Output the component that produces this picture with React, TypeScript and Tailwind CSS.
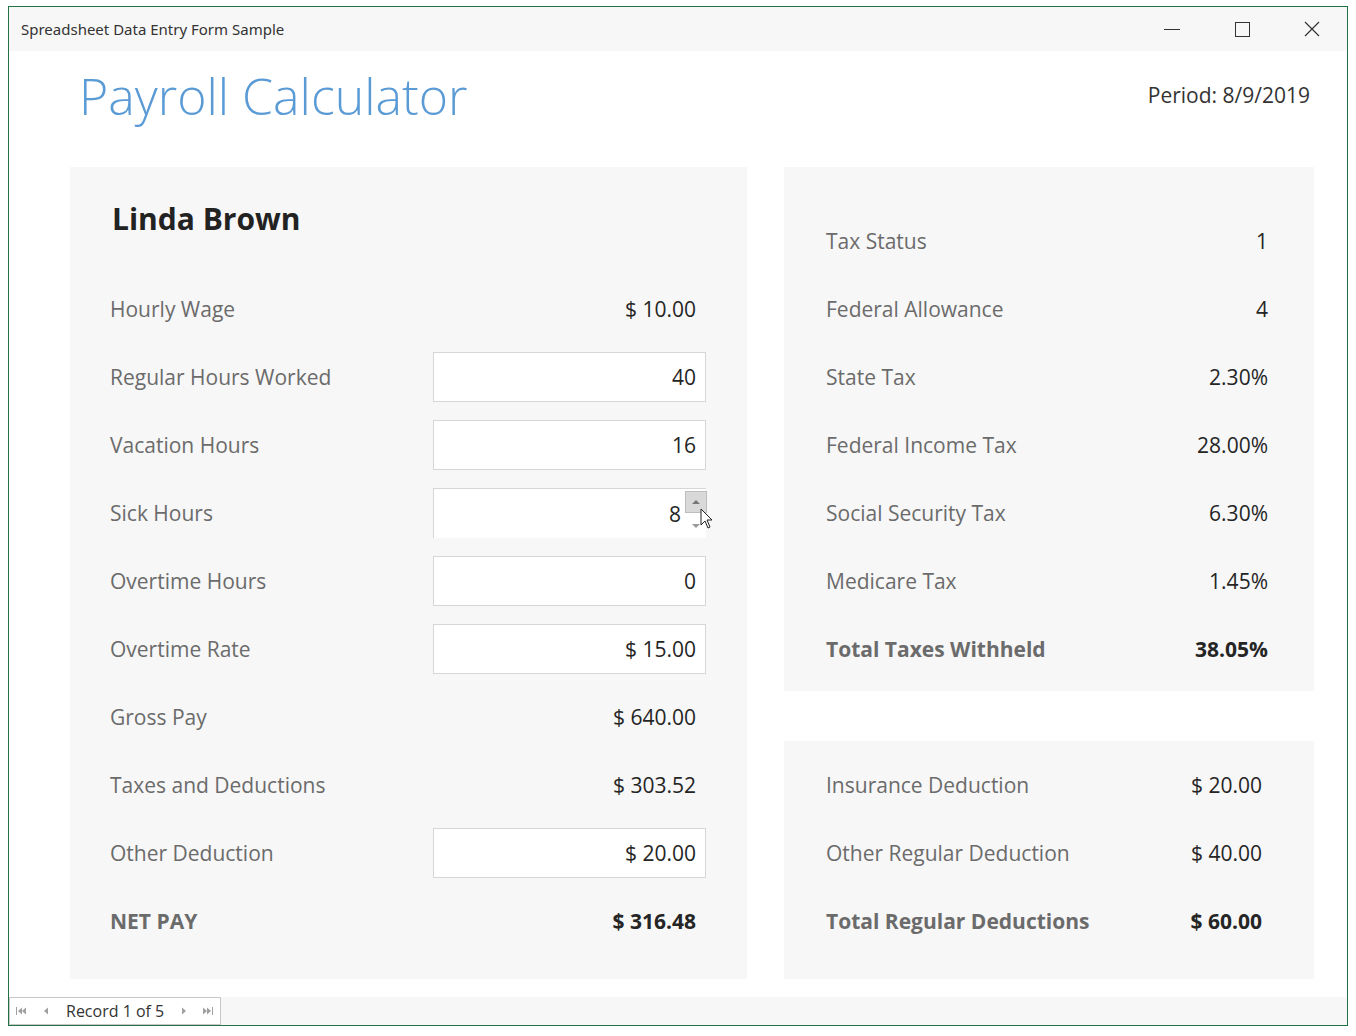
import React from "react";

const font = { fontFamily: '"Open Sans", "Noto Sans", sans-serif' };

type Row = { label: string; value: string; input?: boolean; bold?: boolean; spin?: boolean };

const leftRows: Row[] = [
  { label: "Hourly Wage", value: "$ 10.00" },
  { label: "Regular Hours Worked", value: "40", input: true },
  { label: "Vacation Hours", value: "16", input: true },
  { label: "Sick Hours", value: "8", input: true, spin: true },
  { label: "Overtime Hours", value: "0", input: true },
  { label: "Overtime Rate", value: "$ 15.00", input: true },
  { label: "Gross Pay", value: "$ 640.00" },
  { label: "Taxes and Deductions", value: "$ 303.52" },
  { label: "Other Deduction", value: "$ 20.00", input: true },
  { label: "NET PAY", value: "$ 316.48", bold: true },
];

const taxRows: Row[] = [
  { label: "Tax Status", value: "1" },
  { label: "Federal Allowance", value: "4" },
  { label: "State Tax", value: "2.30%" },
  { label: "Federal Income Tax", value: "28.00%" },
  { label: "Social Security Tax", value: "6.30%" },
  { label: "Medicare Tax", value: "1.45%" },
  { label: "Total Taxes Withheld", value: "38.05%", bold: true },
];

const dedRows: Row[] = [
  { label: "Insurance Deduction", value: "$ 20.00" },
  { label: "Other Regular Deduction", value: "$ 40.00" },
  { label: "Total Regular Deductions", value: "$ 60.00", bold: true },
];

function Label({ row }: { row: Row }) {
  return (
    <span className={`mt-[2px] text-[21px] text-[#6b6b6b] ${row.bold ? "font-bold" : ""}`}>{row.label}</span>
  );
}

function Value({ row }: { row: Row }) {
  return (
    <span className={`mt-[2px] text-[21px] text-[#252525] ${row.bold ? "font-bold" : ""}`}>{row.value}</span>
  );
}

function LeftRow({ row }: { row: Row }) {
  return (
    <div className="h-[68px] flex items-center justify-between">
      <Label row={row} />
      {row.input ? (
        <div
          className={`relative w-[273px] h-[50px] bg-white flex items-center justify-end border-[#d6d6d6] ${
            row.spin ? "border-l border-t pr-[25px]" : "border pr-[9px]"
          }`}
        >
          <Value row={row} />
          {row.spin && (
            <>
              <div className="absolute right-[-1px] top-[2px] w-[22px] h-[22px] bg-[#d9d9d9] border border-[#bdbdbd] flex items-center justify-center">
                <div className="w-0 h-0 border-l-[4px] border-r-[4px] border-b-[4px] border-l-transparent border-r-transparent border-b-[#777]" />
              </div>
              <div className="absolute right-[6px] top-[35px] w-0 h-0 border-l-[4px] border-r-[4px] border-t-[4px] border-l-transparent border-r-transparent border-t-[#999]" />
              <svg className="absolute left-[266px] top-[19px]" width="14" height="22" viewBox="0 0 14 22">
                <path d="M1 1 L1 17 L5 13 L8 20 L10 19 L7 12 L12 12 Z" fill="white" stroke="#222" strokeWidth="1" />
              </svg>
            </>
          )}
        </div>
      ) : (
        <div className="pr-[10px] flex">
          <Value row={row} />
        </div>
      )}
    </div>
  );
}

function SideRow({ row }: { row: Row }) {
  return (
    <div className="h-[68px] flex items-center justify-between">
      <Label row={row} />
      <Value row={row} />
    </div>
  );
}

function NavArrow({ dir, bar }: { dir: "l" | "r"; bar?: boolean }) {
  return (
    <svg width="12" height="10" viewBox="0 0 12 10" fill="#a0a0a0">
      {dir === "l" ? (
        <>
          {bar && <rect x="0" y="1" width="1" height="8" />}
          {bar && <path d="M2 5 L6 1.5 L6 8.5 Z" />}
          <path d={bar ? "M6 5 L10 1.5 L10 8.5 Z" : "M4 5 L8 1.5 L8 8.5 Z"} />
        </>
      ) : (
        <>
          <path d={bar ? "M1 1.5 L5 5 L1 8.5 Z" : "M4 1.5 L8 5 L4 8.5 Z"} />
          {bar && <path d="M5 1.5 L9 5 L5 8.5 Z" />}
          {bar && <rect x="10" y="1" width="1" height="8" />}
        </>
      )}
    </svg>
  );
}

export default function App() {
  return (
    <div className="w-[1356px] h-[1036px] bg-white pt-[6px] pl-[8px]" style={font}>
      <div className="w-[1340px] h-[1020px] border border-[#217346] flex flex-col">
        {/* title bar */}
        <div className="h-[44px] bg-[#f7f7f7] flex items-center justify-between shrink-0">
          <span className="pl-[12px] text-[15px] text-[#333]" style={{ fontFamily: '"Noto Sans", sans-serif' }}>
            Spreadsheet Data Entry Form Sample
          </span>
          <div className="flex h-full">
            <div className="w-[70px] flex items-center justify-center">
              <div className="w-[16px] h-px bg-[#333]" />
            </div>
            <div className="w-[70px] flex items-center justify-center">
              <div className="w-[15px] h-[15px] border border-[#333]" />
            </div>
            <div className="w-[70px] flex items-center justify-center">
              <svg width="16" height="16" viewBox="0 0 16 16" stroke="#333" strokeWidth="1.2">
                <path d="M1 1 L15 15 M15 1 L1 15" />
              </svg>
            </div>
          </div>
        </div>

        {/* content */}
        <div className="flex-1 flex flex-col pl-[61px] pr-[33px]">
          <div className="h-[116px] flex items-start justify-between">
            <h1 className="mt-[13px] ml-[9px] text-[50px] font-light text-[#5b9bd5] leading-[64px]">
              Payroll Calculator
            </h1>
            <span className="mt-[29px] mr-[4px] text-[21px] text-[#333]">Period: 8/9/2019</span>
          </div>

          <div className="flex gap-[37px]">
            <div className="w-[677px] bg-[#f7f7f7] pl-[40px] pr-[41px] pb-[24px]">
              <div className="h-[108px] pt-[32px] pl-[2px]">
                <div className="leading-[40px] text-[30px] font-bold text-[#222]">Linda Brown</div>
              </div>
              {leftRows.map((r) => (
                <LeftRow key={r.label} row={r} />
              ))}
            </div>

            <div className="w-[530px] flex flex-col gap-[50px]">
              <div className="bg-[#f7f7f7] pl-[42px] pr-[46px] pt-[40px] pb-[8px]">
                {taxRows.map((r) => (
                  <SideRow key={r.label} row={r} />
                ))}
              </div>
              <div className="bg-[#f7f7f7] pl-[42px] pr-[52px] pt-[10px] pb-[24px]">
                {dedRows.map((r) => (
                  <SideRow key={r.label} row={r} />
                ))}
              </div>
            </div>
          </div>
        </div>

        {/* record navigator */}
        <div className="h-[28px] bg-[#f7f7f7] flex shrink-0">
          <div className="w-[212px] h-[28px] bg-white border border-[#c8c8c8] flex items-center pl-[6px] gap-[12px]">
            <NavArrow dir="l" bar />
            <NavArrow dir="l" />
            <span className="text-[16px] text-[#333] mx-[2px]">Record 1 of 5</span>
            <NavArrow dir="r" />
            <NavArrow dir="r" bar />
          </div>
        </div>
      </div>
    </div>
  );
}
